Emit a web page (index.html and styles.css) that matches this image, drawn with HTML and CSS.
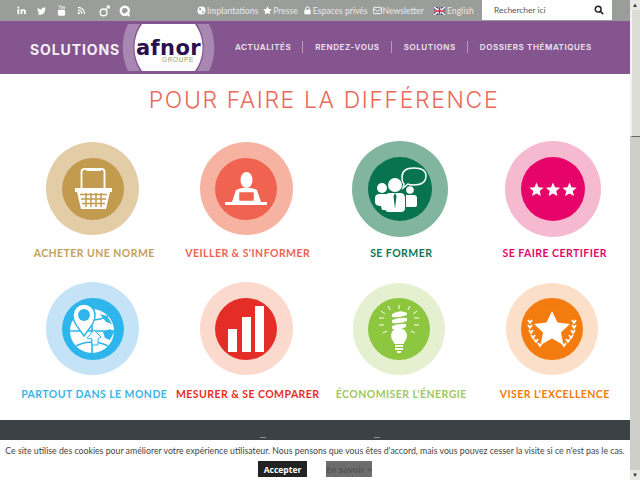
FILE: index.html
```html
<!DOCTYPE html>
<html lang="fr">
<head>
    <meta charset="UTF-8">
    <title>Afnor Solutions</title>
    <link rel="stylesheet" href="styles.css">
</head>
<body>
    <div class="page">
        <div class="topbar">
            <div class="social">
                <svg class="soc" viewBox="0 0 10 10"><rect x="0.5" y="3.5" width="2" height="5.5" fill="#fff"/><circle cx="1.5" cy="1.6" r="1.1" fill="#fff"/><path d="M4 3.5h2v.9c.4-.6 1-.9 1.700-.9C9.200 3.500 9.800 4.500 9.800 6v3H7.800V6.300c0-.7-.3-1.100-.9-1.100S6 5.700 6 6.300V9H4z" fill="#fff"/></svg>
                <svg class="soc" viewBox="0 0 10 10"><path d="M10 2.200c-.4.200-.8.300-1.200.3.400-.3.800-.7.900-1.200-.4.200-.9.400-1.300.5C7.300 1.200 5 1.900 5 4 3.400 3.900 1.900 3.100.9 1.900.3 2.900.6 4.100 1.500 4.700c-.3 0-.6-.1-.9-.2 0 1 .7 1.900 1.600 2.100-.3.100-.6.100-.9 0 .3.800 1 1.400 1.900 1.400C2.300 8.700 1.200 9 0 8.900c3.600 2.100 9.200.4 9-5.700.4-.3.700-.6 1-1z" fill="#fff"/></svg>
                <svg class="soc soc-yt" viewBox="0 0 10 12"><path d="M2 0l1 2.200L4 0M3 2.200V4M5.300 1.500v2.300h1V1.500zM7.500 1.500v2c0 .4.700.4 1.200 0v-2" stroke="#fff" stroke-width=".7" fill="none"/><rect x="1" y="5.200" width="8" height="6.500" rx="1.200" fill="#fff"/></svg>
                <svg class="soc" viewBox="0 0 10 10"><circle cx="2" cy="8" r="1.200" fill="#fff"/><path d="M1 4.500a4.500 4.500 0 0 1 4.500 4.500M1 1.500a7.500 7.500 0 0 1 7.500 7.500" stroke="#fff" stroke-width="1.300" fill="none"/></svg>
                <svg class="soc soc-gap" viewBox="0 0 12 13"><circle cx="5" cy="8" r="3.700" stroke="#fff" stroke-width="1.500" fill="none"/><path d="M7.500 5L11 1M8 1h3.200v3" stroke="#fff" stroke-width="1.200" fill="none"/></svg>
                <svg class="soc soc-q" viewBox="0 0 12 12"><circle cx="5.800" cy="5.800" r="4" stroke="#fff" stroke-width="2.400" fill="none"/><path d="M7 7.500l3.500 3.500" stroke="#fff" stroke-width="2"/></svg>
            </div>
            <ul class="toplinks">
                <li><svg viewBox="0 0 10 10"><circle cx="5" cy="5" r="4.500" fill="#fff"/><path d="M3 2l2 1-1 2-2-1zM6 5l2 1-2 3z" fill="#9b9d9b"/></svg>Implantations</li>
                <li><svg viewBox="0 0 10 10"><path d="M5 .3l1.500 3 3.300.5-2.400 2.300.6 3.300L5 7.900 2 9.400l.6-3.300L.2 3.800l3.300-.5z" fill="#fff"/></svg>Presse</li>
                <li><svg viewBox="0 0 10 10"><rect x="1.500" y="4.300" width="7" height="5" rx=".8" fill="#fff"/><path d="M3 4.500V3a2 2 0 0 1 4 0v1.500" stroke="#fff" stroke-width="1.100" fill="none"/></svg>Espaces privés</li>
                <li><svg viewBox="0 0 10 10"><rect x=".5" y="1.500" width="9" height="7" rx="1" stroke="#fff" fill="none"/><path d="M1 3l4 3 4-3" stroke="#fff" fill="none"/></svg>Newsletter</li>
                <li class="lang"><svg viewBox="0 0 10 7"><rect width="10" height="7" fill="#2b3f86"/><path d="M0 0l10 7M10 0L0 7" stroke="#fff" stroke-width="1.400"/><path d="M5 0v7M0 3.500h10" stroke="#fff" stroke-width="2.200"/><path d="M5 0v7M0 3.500h10" stroke="#c8203a" stroke-width="1.200"/></svg>English</li>
            </ul>
            <div class="search">
                <span>Rechercher ici</span>
                <svg viewBox="0 0 12 12"><circle cx="5" cy="5" r="3.500" stroke="#222" stroke-width="1.800" fill="none"/><path d="M7.500 7.500l3.500 3.500" stroke="#222" stroke-width="2"/></svg>
            </div>
        </div>

        <header class="mainbar">
            <div class="brand">SOLUTIONS</div>
            <svg class="logo" viewBox="0 0 93 47">
                <path d="M6 0H87C94 14 94 33 87 47H6C-1 33 -1 14 6 0z" fill="#a888b2"/>
                <path d="M18 0H75C84 14 84 33 75 47H18C9 33 9 14 18 0z" fill="#85558f"/>
                <path d="M20 0H73C83 14 83 33 73 47H20C10 33 10 14 20 0z" fill="#fff"/>
                <text x="46.500" y="31" class="logo-name" text-anchor="middle">afnor</text>
                <text x="56" y="38" class="logo-sub" text-anchor="middle">GROUPE</text>
            </svg>
            <nav class="menu">
                <a>Actualités</a>
                <a>Rendez-vous</a>
                <a>Solutions</a>
                <a>Dossiers thématiques</a>
            </nav>
        </header>

        <main class="content">
            <h1>Pour faire la différence</h1>
            <div class="tiles">
                <div class="tile beige">
                    <div class="ring"><div class="disc">
                        <svg viewBox="0 0 62 62">
                            <path d="M19.500 31V14q0-3 3-3h17q3 0 3 3v17" stroke="#fff" stroke-width="1.800" fill="none"/>
                            <rect x="24" y="10" width="15" height="3" rx="1" fill="#fff"/>
                            <path d="M13 30h37v4h-2l-4 17H19l-4-17h-2z" fill="#fff"/>
                            <path d="M18 36.500h27M19 41h25M20 45.500h23M24 35v14M29 35v14M34 35v14M39 35v14" stroke="#c29b4f" stroke-width="1.500"/>
                        </svg>
                    </div></div>
                    <p>Acheter une norme</p>
                </div>
                <div class="tile salmon">
                    <div class="ring"><div class="disc">
                        <svg viewBox="0 0 62 62">
                            <ellipse cx="31.500" cy="22" rx="6" ry="8" fill="#fff"/>
                            <path d="M21 32q4-2 7-2h7q3 0 7 2l4 12H17z" fill="#fff"/>
                            <rect x="24" y="34" width="15" height="9" rx="1" fill="#ef6350" stroke="#fff" stroke-width=".5"/>
                            <rect x="10" y="44" width="42" height="3" fill="#fff"/>
                        </svg>
                    </div></div>
                    <p>Veiller &amp; s'informer</p>
                </div>
                <div class="tile green big">
                    <div class="ring"><div class="disc">
                        <svg viewBox="0 0 64 64">
                            <path d="M36 27q-2-2-2-7 0-9 12-9t12 8q0 9-13 9-4 0-5-1l-5 4z" stroke="#fff" stroke-width="1.500" fill="none"/>
                            <circle cx="14" cy="31" r="5" fill="#fff"/>
                            <circle cx="42" cy="33" r="3.800" fill="#fff"/>
                            <path d="M7 41q0-4 5-4h6v16h-4l-1-4q-6 0-6-4zM38 38h8q3 0 3 3v7q0 2-2 2h-9z" fill="#fff"/>
                            <circle cx="27" cy="28" r="7" fill="#fff"/>
                            <path d="M17 41q0-5 5-5h10q5 0 5 5v10q0 4-4 4H21q-4 0-4-4z" fill="#fff"/>
                            <path d="M27 36l-1.500 3 1.500 13 1.500-13z" fill="#07734f"/>
                        </svg>
                    </div></div>
                    <p>Se former</p>
                </div>
                <div class="tile pink big">
                    <div class="ring"><div class="disc">
                        <svg viewBox="0 0 64 64">
                            <path transform="translate(15.500 33)" d="M0-7.500L2-2.750 7.130-2.320 3.230 1.050 4.410 6.070 0 3.400-4.410 6.070-3.230 1.050-7.130-2.320-2-2.750z" fill="#fff"/>
                            <path transform="translate(32 33)" d="M0-7.500L2-2.750 7.130-2.320 3.230 1.050 4.410 6.070 0 3.400-4.410 6.070-3.230 1.050-7.130-2.320-2-2.750z" fill="#fff"/>
                            <path transform="translate(48.500 33)" d="M0-7.500L2-2.750 7.130-2.320 3.230 1.050 4.410 6.070 0 3.400-4.410 6.070-3.230 1.050-7.130-2.320-2-2.750z" fill="#fff"/>
                        </svg>
                    </div></div>
                    <p>Se faire certifier</p>
                </div>
                <div class="tile blue">
                    <div class="ring"><div class="disc">
                        <svg viewBox="0 0 62 62">
                            <circle cx="30" cy="33" r="22" fill="#fff"/>
                            <path d="M8 33h44M30 11v44M14 18q16 8 32 0M14 48q16-8 32 0" stroke="#2db5ec" stroke-width="1.600" fill="none"/>
                            <path d="M25 40l7-8 7 7-3 2v6h-6v-6z" fill="#fff" stroke="#2db5ec" stroke-width="1"/>
                            <path d="M22 38C16 29 11 25 11 17a11 11 0 0 1 22 0c0 8-5 12-11 21z" fill="#fff" stroke="#2db5ec" stroke-width="1.500"/>
                            <circle cx="22" cy="17" r="6" fill="#2db5ec"/>
                            <path d="M38 16l7 2 5 8-6-2zM41 34l7-3 4 3-4 8-5-2z" fill="#2db5ec"/>
                        </svg>
                    </div></div>
                    <p>Partout dans le monde</p>
                </div>
                <div class="tile red">
                    <div class="ring"><div class="disc">
                        <svg viewBox="0 0 62 62">
                            <rect x="13" y="31" width="9" height="23" fill="#fff"/>
                            <rect x="27" y="19" width="9" height="35" fill="#fff"/>
                            <rect x="40" y="8" width="9" height="46" fill="#fff"/>
                        </svg>
                    </div></div>
                    <p>Mesurer &amp; se comparer</p>
                </div>
                <div class="tile lime">
                    <div class="ring"><div class="disc">
                        <svg viewBox="0 0 62 62">
                            <path d="M31 7v4M20 8l2 4M42 8l-2 4M13 13l4 3M49 13l-4 3M11 20h5M51 20h-5M11 27h5M51 27h-5M15 35l4-2M47 35l-4-2" stroke="#fff" stroke-width="1"/>
                            <path d="M24 16q8-5 15-1v2q-8 3-15 2zM24 22q8-3 15-2v3q-8 3-15 2zM24 28q8-3 14-2v3q-7 3-14 2z" fill="#fff"/>
                            <circle cx="31" cy="38" r="8" fill="#fff"/>
                            <path d="M26 43h10v3h-10zM27 47h8v2h-8zM27 50h8v2h-8zM29 53h4v2h-4z" fill="#fff"/>
                        </svg>
                    </div></div>
                    <p>Économiser l'énergie</p>
                </div>
                <div class="tile orange">
                    <div class="ring"><div class="disc">
                        <svg viewBox="0 0 62 62">
                            <path d="M31 13l5.500 11.500 12.500 1.500-9 8.500 2.400 12.500L31 40.500 19.600 47 22 34.500 13 26l12.500-1.500z" fill="#fff"/>
                            <path d="M7 22l2 3 2-3M7 27l2 3 2-3M8 32l2 3 2-3M10 37l2 3 2-3M13 41l2 3 2-3M17 45l2 3 2-3M55 22l-2 3-2-3M55 27l-2 3-2-3M54 32l-2 3-2-3M52 37l-2 3-2-3M49 41l-2 3-2-3M45 45l-2 3-2-3" stroke="#fff" stroke-width="1.800" fill="none"/>
                        </svg>
                    </div></div>
                    <p>Viser l'excellence</p>
                </div>
            </div>
        </main>

        <footer class="footer">
            <span class="footer-mark"></span>
            <span class="footer-mark"></span>
        </footer>

        <div class="cookie">
            <p>Ce site utilise des cookies pour améliorer votre expérience utilisateur. Nous pensons que vous êtes d'accord, mais vous pouvez cesser la visite si ce n'est pas le cas.</p>
            <div class="cookie-btns">
                <button class="btn-ok">Accepter</button>
                <button class="btn-more">En savoir +</button>
            </div>
        </div>
    </div>

    <div class="scrollbar">
        <div class="sb-btn">&#9650;</div>
        <div class="sb-thumb"></div>
        <div class="sb-track"></div>
        <div class="sb-btn">&#9660;</div>
    </div>
</body>
</html>
```

FILE: styles.css
```css
body {
    font-family: 'Lato', sans-serif;
    margin: 0;
    padding: 0;
    height: 480px;
    overflow: hidden;
    display: flex;
    background-color: #fff;
}

.page {
    position: relative;
    width: 630px;
    height: 480px;
    overflow: hidden;
    display: flex;
    flex-direction: column;
}

/* top grey strip */
.topbar {
    height: 21px;
    flex: none;
    background-color: #9b9d9b;
    display: flex;
    align-items: flex-start;
}

.social {
    width: 197px;
    height: 21px;
    flex: none;
    padding-left: 17px;
    box-sizing: border-box;
    display: flex;
    align-items: center;
}

.soc {
    width: 9px;
    height: 9px;
    margin-right: 11px;
}

.soc-yt {
    height: 11px;
}

.soc-gap {
    width: 11px;
    height: 12px;
    margin-left: 2px;
    margin-right: 9px;
}

.soc-q {
    width: 12px;
    height: 12px;
}

.toplinks {
    list-style: none;
    margin: 0;
    padding: 0;
    height: 21px;
    width: 285px;
    flex: none;
    display: flex;
    align-items: center;
    gap: 5px;
    font-size: 8.6px;
    color: #e9e9e9;
    white-space: nowrap;
}

.toplinks li {
    display: flex;
    align-items: center;
    gap: 1px;
}

.toplinks svg {
    width: 9px;
    height: 9px;
}

.toplinks .lang {
    margin-left: 5px;
    gap: 2px;
}

.toplinks .lang svg {
    width: 11px;
    height: 8px;
}

.search {
    width: 130px;
    height: 20px;
    flex: none;
    background-color: #fff;
    box-sizing: border-box;
    padding: 0 8px 0 12px;
    display: flex;
    align-items: center;
    justify-content: space-between;
    font-size: 8.4px;
    color: #555;
}

.search svg {
    width: 10px;
    height: 10px;
}

/* purple header */
.mainbar {
    height: 53px;
    flex: none;
    background-color: #85558f;
    display: flex;
    align-items: flex-start;
    padding-left: 30px;
    box-sizing: border-box;
    color: #fff;
    font-family: 'Inter', sans-serif;
}

.brand {
    width: 92px;
    flex: none;
    font-size: 14px;
    font-weight: 700;
    line-height: 58px;
    letter-spacing: 0.9px;
    color: #f6f0f7;
}

.logo {
    width: 93px;
    height: 47px;
    margin-top: 3px;
    flex: none;
}

.logo-name {
    font-family: 'DejaVu Sans', sans-serif;
    font-size: 21px;
    font-weight: 700;
    fill: #2a0f50;
    letter-spacing: 0.4px;
}

.logo-sub {
    font-family: 'Liberation Sans', sans-serif;
    font-size: 6.5px;
    fill: #9c9a5c;
    letter-spacing: 0.6px;
}

.menu {
    display: flex;
    margin-left: 20px;
    height: 12px;
    margin-top: 20px;
}

.menu a {
    font-size: 8px;
    font-weight: 600;
    line-height: 12px;
    letter-spacing: 0.6px;
    text-transform: uppercase;
    color: #efe6f1;
    white-space: nowrap;
    padding-right: 11px;
    margin-right: 12px;
    border-right: 1px solid #b79bbd;
}

.menu a:last-child {
    border-right: none;
}

/* tiles */
.content {
    flex: none;
    height: 346px;
    padding-left: 16px;
    box-sizing: border-box;
}

h1 {
    margin: 0;
    height: 50px;
    padding: 11px 0 0 2px;
    box-sizing: border-box;
    font-family: 'Inter', sans-serif;
    font-size: 23px;
    font-weight: 300;
    line-height: 30px;
    letter-spacing: 1.6px;
    text-align: center;
    text-transform: uppercase;
    color: #ea6a5c;
}

.tiles {
    margin-top: 17px;
    display: grid;
    grid-template-columns: repeat(4, 153.5px);
    grid-auto-rows: 141px;
}

.tile {
    display: flex;
    flex-direction: column;
    align-items: center;
}

.tile p {
    margin: 8px 0 0;
    padding-left: 3px;
    font-family: 'Lato', sans-serif;
    font-size: 10.5px;
    font-weight: 700;
    line-height: 16px;
    letter-spacing: 0.45px;
    text-transform: uppercase;
    white-space: nowrap;
}

.ring {
    width: 93px;
    height: 93px;
    margin: 1px 0 2px;
    border-radius: 50%;
    display: flex;
    align-items: center;
    justify-content: center;
}

.disc {
    width: 62px;
    height: 62px;
    border-radius: 50%;
}

.disc svg {
    display: block;
    width: 100%;
    height: 100%;
}

.big .ring {
    width: 96px;
    height: 96px;
    margin: 0;
}

.big .disc {
    width: 64px;
    height: 64px;
}

.blue .ring,
.red .ring {
    margin: 0 0 3px;
}

.lime .ring,
.orange .ring {
    width: 92px;
    height: 92px;
    margin: 1px 2px 3px 0;
}

.beige .ring { background-color: #e3cda6; }
.beige .disc { background-color: #c29b4f; }
.beige p { color: #c5a05a; }

.salmon .ring { background-color: #f6b3a2; }
.salmon .disc { background-color: #ef6350; }
.salmon p { color: #ef6350; }

.green .ring { background-color: #82b5a0; }
.green .disc { background-color: #07734f; }
.green p { color: #0a7555; }

.pink .ring { background-color: #f5b9d0; }
.pink .disc { background-color: #e6046b; }
.pink p { color: #e6046b; }

.blue .ring { background-color: #c5e3f7; }
.blue .disc { background-color: #2db5ec; }
.blue p { color: #3bb4e6; }

.red .ring { background-color: #fbd9cd; }
.red .disc { background-color: #e52d27; }
.red p { color: #e52d27; }

.lime .ring { background-color: #e4f0d0; }
.lime .disc { background-color: #8dc63f; }
.lime p { color: #a0c860; }

.orange .ring { background-color: #fbdfc8; }
.orange .disc { background-color: #f47b0e; }
.orange p { color: #f47b0e; }

/* dark footer, mostly hidden by the cookie bar */
.footer {
    flex: none;
    height: 60px;
    background-color: #3a4245;
    display: flex;
    align-items: flex-start;
    padding: 17px 0 0 260px;
    box-sizing: border-box;
    gap: 108px;
}

.footer-mark {
    width: 6px;
    height: 1px;
    background-color: #8d9496;
}

.cookie {
    position: absolute;
    left: 0;
    right: 0;
    bottom: 0;
    height: 40px;
    background-color: #fff;
    text-align: center;
}

.cookie p {
    margin: 0;
    padding-top: 5px;
    font-size: 8.75px;
    line-height: 12px;
    color: #444;
    white-space: nowrap;
}

.cookie-btns {
    display: flex;
    justify-content: flex-start;
    padding: 4px 0 0 258px;
    gap: 19px;
}

.cookie-btns button {
    height: 16px;
    padding: 0;
    border: none;
    font-family: 'Open Sans', sans-serif;
    font-size: 8.5px;
    font-weight: 700;
}

.btn-ok {
    width: 49px;
    background-color: #222;
    color: #fff;
}

.btn-more {
    width: 46px;
    background-color: #6d6d6d;
    color: #555;
}

/* window scrollbar */
.scrollbar {
    width: 10px;
    height: 480px;
    flex: none;
    background-color: #cfcfc9;
    display: flex;
    flex-direction: column;
}

.sb-btn {
    height: 10px;
    flex: none;
    background-color: #e8e8e4;
    font-size: 6px;
    line-height: 10px;
    text-align: center;
    color: #333;
}

.sb-thumb {
    height: 127px;
    flex: none;
    background-color: #dcdcd6;
    border-left: 2px solid #f2f2f0;
    border-bottom: 1px solid #666;
    box-sizing: border-box;
}

.sb-track {
    flex: 1;
}
```
